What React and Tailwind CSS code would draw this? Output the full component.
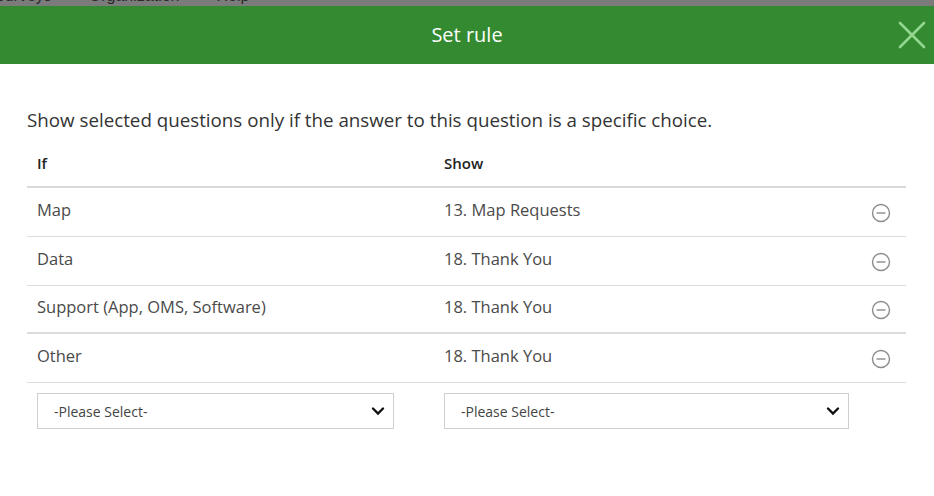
import React from 'react';

const rows = [
    { when: 'Map', show: '13. Map Requests' },
    { when: 'Data', show: '18. Thank You' },
    { when: 'Support (App, OMS, Software)', show: '18. Thank You' },
    { when: 'Other', show: '18. Thank You' },
];

function MinusCircle() {
    return (
        <svg width="20" height="20" viewBox="0 0 20 20" fill="none" stroke="#8c8c8c" strokeWidth="1.4">
            <circle cx="10" cy="10" r="8.5" />
            <line x1="5.5" y1="10" x2="14.5" y2="10" />
        </svg>
    );
}

function Chevron() {
    return (
        <svg width="14" height="10" viewBox="0 0 14 10" fill="none" stroke="#111" strokeWidth="2.4" strokeLinecap="round">
            <polyline points="2,2.5 7,7.5 12,2.5" />
        </svg>
    );
}

function SelectBox({ width }) {
    return (
        <div className={`flex h-[36px] items-center justify-between border border-[#cfcfcf] bg-white pl-[16px] pr-[8px] text-[14px] text-[#444] ${width}`}>
            <span>-Please Select-</span>
            <Chevron />
        </div>
    );
}

export default function App() {
    return (
        <div className="min-h-screen bg-white" style={{ fontFamily: '"Open Sans", "Noto Sans", sans-serif' }}>
            <div className="h-[6px] overflow-hidden bg-[#7b7b7b]">
                <div className="-mt-[13px] flex gap-[37px] text-[16px] leading-[18px] text-[#2a2a2a]" style={{ fontFamily: '"Liberation Sans", sans-serif' }}>
                    <span className="-ml-[6px]">Surveys</span>
                    <span>Organization</span>
                    <span>Help</span>
                </div>
            </div>
            <div className="relative flex h-[58px] items-center justify-center bg-[#338a31]">
                <h1 className="text-[20px] text-white">Set rule</h1>
                <button className="absolute right-[6px] top-[13px] p-0">
                    <svg width="32" height="32" viewBox="0 0 32 32" stroke="#93d68f" strokeWidth="2.6" strokeLinecap="round">
                        <line x1="4" y1="4" x2="28" y2="28" />
                        <line x1="28" y1="4" x2="4" y2="28" />
                    </svg>
                </button>
            </div>

            <div className="px-[27px] pt-[44px]">
                <p className="text-[18.75px] leading-[24px] text-[#333]">
                    Show selected questions only if the answer to this question is a specific choice.
                </p>

                <div className="mt-[7px] w-[879px]">
                    <div className="flex h-[49px] items-center border-b-2 border-[#d9d9d9] pt-[2px] text-[15px] font-semibold text-[#222]">
                        <div className="w-[407px] pl-[10px]">If</div>
                        <div className="flex-1 pl-[10px]">Show</div>
                    </div>
                    {rows.map((row, i) => (
                        <div
                            key={i}
                            className={`flex items-center text-[16.5px] text-[#4a4a4a] ${i === 2 ? 'h-[48px] border-b-2' : 'h-[49px] border-b'} border-[#dcdcdc]`}
                        >
                            <div className="w-[407px] pl-[10px] -mt-[4px]">{row.when}</div>
                            <div className="flex-1 pl-[10px] -mt-[4px]">{row.show}</div>
                            <div className="flex w-[46px] justify-end pr-[15px] pt-[2px]">
                                <MinusCircle />
                            </div>
                        </div>
                    ))}
                    <div className="flex pt-[10px]">
                        <div className="w-[407px] pl-[10px]">
                            <SelectBox width="w-[357px]" />
                        </div>
                        <div className="pl-[10px]">
                            <SelectBox width="w-[405px]" />
                        </div>
                    </div>
                </div>
            </div>
        </div>
    );
}
